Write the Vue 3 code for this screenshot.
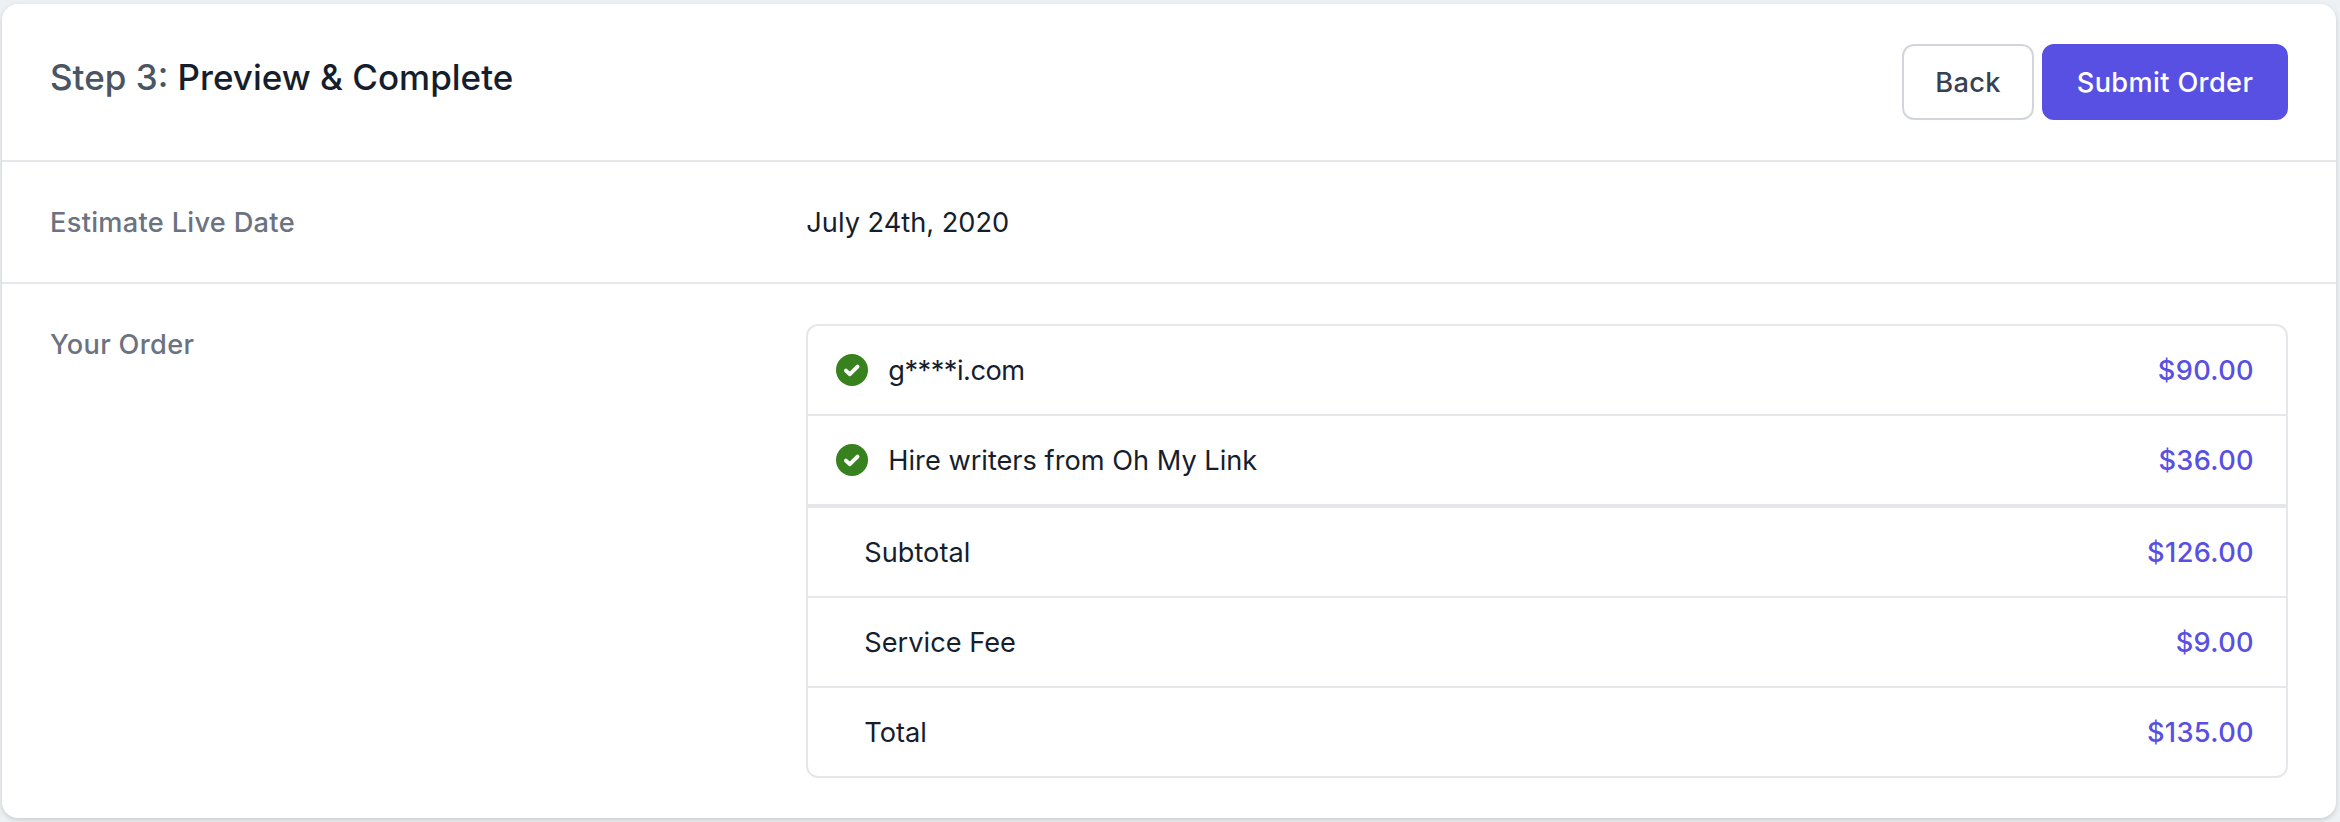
<script setup>
const items = [
  { label: 'g****i.com', price: '$90.00', masked: true },
  { label: 'Hire writers from Oh My Link', price: '$36.00' },
]
const totals = [
  { label: 'Subtotal', price: '$126.00' },
  { label: 'Service Fee', price: '$9.00' },
  { label: 'Total', price: '$135.00' },
]
</script>

<template>
  <main class="page">
    <section class="card">
      <header class="head">
        <h3 class="title"><span class="step">Step 3:</span> Preview &amp; Complete</h3>
        <div class="actions">
          <button type="button" class="btn back">Back</button>
          <button type="button" class="btn submit">Submit Order</button>
        </div>
      </header>
      <dl class="details">
        <div class="detail">
          <dt class="term">Estimate Live Date</dt>
          <dd class="value date">July 24th, 2020</dd>
        </div>
        <div class="detail">
          <dt class="term">Your Order</dt>
          <dd class="value">
            <div class="order">
              <ul class="list">
                <li v-for="i in items" :key="i.label" class="row">
                  <svg class="check" viewBox="0 0 32 32">
                    <circle cx="16" cy="16" r="16" fill="#38811f" />
                    <path d="M9.9 16.6L13.9 20.2L21.5 12.6" fill="none" stroke="#fff" stroke-width="3.9" stroke-linecap="round" stroke-linejoin="round" />
                  </svg>
                  <span class="label" :class="{ masked: i.masked }">{{ i.label }}</span>
                  <span class="price">{{ i.price }}</span>
                </li>
              </ul>
              <ul class="list totals">
                <li v-for="t in totals" :key="t.label" class="row">
                  <span class="label">{{ t.label }}</span>
                  <span class="price">{{ t.price }}</span>
                </li>
              </ul>
            </div>
          </dd>
        </div>
      </dl>
    </section>
  </main>
</template>

<style>
body {
  background: #edf1f4;
}
</style>

<style scoped>
.page {
  box-sizing: border-box;
  height: 822px;
  padding: 4px 4px 4px 2px;
  overflow: hidden;
  font-family: Inter, "Liberation Sans", sans-serif;
  font-size: 27.2px;
  line-height: 40px;
  color: #161e2e;
}
.card {
  height: 814px;
  background: #fff;
  border-radius: 16px;
  box-shadow: 0 2px 6px rgba(0, 0, 0, 0.1), 0 2px 4px rgba(0, 0, 0, 0.06);
}
.head {
  display: flex;
  justify-content: space-between;
  align-items: flex-start;
  padding: 40px 48px;
  border-bottom: 2px solid #e5e7eb;
}
.title {
  margin: 0;
  font-size: 35px;
  font-weight: 500;
  line-height: 66px;
}
.step {
  color: #4b5563;
}
.actions {
  display: flex;
  gap: 8px;
}
.btn {
  box-sizing: border-box;
  height: 76px;
  padding: 2px 0 0;
  border: 2px solid #d2d6dc;
  border-radius: 12px;
  font: inherit;
  font-weight: 500;
  letter-spacing: 0.35px;
  text-align: center;
  white-space: nowrap;
}
.back {
  width: 132px;
  background: #fff;
  color: #374151;
}
.submit {
  width: 246px;
  background: #5850e2;
  border-color: #5850e2;
  color: #fff;
}
.details {
  margin: 0;
}
.detail {
  display: grid;
  grid-template-columns: repeat(3, 1fr);
  column-gap: 31px;
  padding: 40px 48px;
}
.detail + .detail {
  border-top: 2px solid #e5e7eb;
}
.term,
.date {
  height: 40px;
  line-height: 42px;
}
.term {
  font-weight: 500;
  letter-spacing: 0.3px;
  color: #6b7280;
}
.value {
  grid-column: span 2;
  margin: 0;
}
.order {
  border: 2px solid #e5e7eb;
  border-radius: 12px;
}
.list {
  margin: 0;
  padding: 0;
  list-style: none;
}
.row {
  display: flex;
  align-items: center;
  height: 88px;
  padding: 0 32px 0 28px;
}
.row + .row {
  border-top: 2px solid #e5e7eb;
}
.totals {
  border-top: 4px solid #e5e7eb;
}
.totals .row {
  padding-left: 56px;
}
.check {
  width: 32px;
  height: 32px;
  margin-right: 20px;
}
.label,
.price {
  padding-top: 2px;
}
.label {
  flex: 1;
}
.masked {
  letter-spacing: -0.5px;
}
.price {
  font-weight: 500;
  letter-spacing: 0.35px;
  color: #5850e2;
}
</style>
